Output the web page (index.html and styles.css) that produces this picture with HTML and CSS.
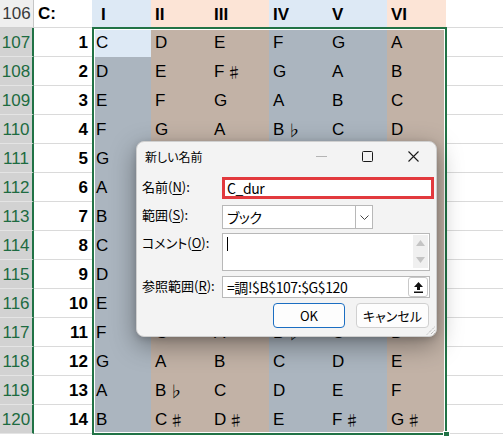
FILE: index.html
```html
<!DOCTYPE html>
<html lang="ja">
<head>
<meta charset="utf-8">
<link rel="stylesheet" href="styles.css">
</head>
<body>
<div class="sheet">
  <div class="c rh0">106</div><div class="c ca hd">C:</div><div class="c hb hd pi">I</div><div class="c hp hd">II</div><div class="c hp hd">III</div><div class="c hb hd">IV</div><div class="c hb hd">V</div><div class="c hp hd">VI</div><div class="c rest"></div>
  <div class="c rh">107</div><div class="c num">1</div><div class="c act">C</div><div class="c br">D</div><div class="c br">E</div><div class="c bl">F</div><div class="c bl">G</div><div class="c br">A</div><div class="c rest"></div>
  <div class="c rh">108</div><div class="c num">2</div><div class="c bl">D</div><div class="c br">E</div><div class="c br">F<span class="acc">♯</span></div><div class="c bl">G</div><div class="c bl">A</div><div class="c br">B</div><div class="c rest"></div>
  <div class="c rh">109</div><div class="c num">3</div><div class="c bl">E</div><div class="c br">F</div><div class="c br">G</div><div class="c bl">A</div><div class="c bl">B</div><div class="c br">C</div><div class="c rest"></div>
  <div class="c rh">110</div><div class="c num">4</div><div class="c bl">F</div><div class="c br">G</div><div class="c br">A</div><div class="c bl">B<span class="acc">♭</span></div><div class="c bl">C</div><div class="c br">D</div><div class="c rest"></div>
  <div class="c rh">111</div><div class="c num">5</div><div class="c bl">G</div><div class="c br"></div><div class="c br"></div><div class="c bl"></div><div class="c bl"></div><div class="c br"></div><div class="c rest"></div>
  <div class="c rh">112</div><div class="c num">6</div><div class="c bl">A</div><div class="c br"></div><div class="c br"></div><div class="c bl"></div><div class="c bl"></div><div class="c br"></div><div class="c rest"></div>
  <div class="c rh">113</div><div class="c num">7</div><div class="c bl">B</div><div class="c br"></div><div class="c br"></div><div class="c bl"></div><div class="c bl"></div><div class="c br"></div><div class="c rest"></div>
  <div class="c rh">114</div><div class="c num">8</div><div class="c bl">C</div><div class="c br"></div><div class="c br"></div><div class="c bl"></div><div class="c bl"></div><div class="c br"></div><div class="c rest"></div>
  <div class="c rh">115</div><div class="c num">9</div><div class="c bl">D</div><div class="c br"></div><div class="c br"></div><div class="c bl"></div><div class="c bl"></div><div class="c br"></div><div class="c rest"></div>
  <div class="c rh">116</div><div class="c num">10</div><div class="c bl">E</div><div class="c br"></div><div class="c br"></div><div class="c bl"></div><div class="c bl"></div><div class="c br"></div><div class="c rest"></div>
  <div class="c rh">117</div><div class="c num">11</div><div class="c bl">F</div><div class="c br">G</div><div class="c br">A</div><div class="c bl">B<span class="acc">♭</span></div><div class="c bl">C</div><div class="c br">D</div><div class="c rest"></div>
  <div class="c rh">118</div><div class="c num">12</div><div class="c bl">G</div><div class="c br">A</div><div class="c br">B</div><div class="c bl">C</div><div class="c bl">D</div><div class="c br">E</div><div class="c rest"></div>
  <div class="c rh">119</div><div class="c num">13</div><div class="c bl">A</div><div class="c br">B<span class="acc">♭</span></div><div class="c br">C</div><div class="c bl">D</div><div class="c bl">E</div><div class="c br">F</div><div class="c rest"></div>
  <div class="c rh">120</div><div class="c num">14</div><div class="c bl">B</div><div class="c br">C<span class="acc">♯</span></div><div class="c br">D<span class="acc">♯</span></div><div class="c bl">E</div><div class="c bl">F<span class="acc">♯</span></div><div class="c br">G<span class="acc">♯</span></div><div class="c rest"></div>

  <div class="sel"><span class="handle"></span></div>

  <div class="dlg">
    <div class="titlebar">
      <span class="title">新しい名前</span>
      <div class="tbtns">
        <span class="tb"><svg width="11" height="1" viewBox="0 0 11 1"><rect width="11" height="1" fill="#b4b4b4"/></svg></span>
        <span class="tb"><svg width="11" height="11" viewBox="0 0 11 11"><rect x="0.5" y="0.5" width="10" height="10" rx="1" fill="none" stroke="#1a1a1a" stroke-width="1"/></svg></span>
        <span class="tb"><svg width="11" height="11" viewBox="0 0 11 11"><path d="M0.5 0.5L10.5 10.5M10.5 0.5L0.5 10.5" stroke="#1a1a1a" stroke-width="1.1"/></svg></span>
      </div>
    </div>
    <div class="form">
      <div class="row r-name"><span class="lbl"><span class="k">名前</span><span>(</span><u>N</u><span>):</span></span><div class="field name">C_dur</div></div>
      <div class="row r-scope"><span class="lbl"><span class="k">範囲</span><span>(</span><u>S</u><span>):</span></span><div class="field combo"><span class="ftext">ブック</span><span class="drop"><svg width="9" height="5" viewBox="0 0 9 5"><path d="M0.5 0.5L4.5 4.5L8.5 0.5" fill="none" stroke="#444" stroke-width="1"/></svg></span></div></div>
      <div class="row r-memo"><span class="lbl"><span class="k">コメント</span><span>(</span><u>O</u><span>):</span></span><div class="field memo"><span class="caret"></span><div class="vscroll"><svg width="9" height="6" viewBox="0 0 9 6"><path d="M4.5 0L9 6H0Z" fill="#c4c4c4"/></svg><svg width="9" height="6" viewBox="0 0 9 6"><path d="M0 0H9L4.5 6Z" fill="#c4c4c4"/></svg></div></div></div>
      <div class="row r-ref"><span class="lbl"><span class="k">参照範囲</span><span>(</span><u>R</u><span>):</span></span><div class="field ref"><span class="ftext">=調!$B$107:$G$120</span><span class="refbtn"><svg width="9" height="11" viewBox="0 0 9 11"><path d="M4.5 0L9 5H6V8H3V5H0Z" fill="#111"/><rect x="0" y="9.5" width="9" height="1.5" fill="#111"/></svg></span></div></div>
      <div class="btnrow"><span class="btn ok">OK</span><span class="btn">キャンセル</span></div>
    </div>
    <svg class="grip" width="9" height="9" viewBox="0 0 9 9"><path d="M8.5 1L1 8.5M8.5 4.5L4.5 8.5M8.5 7.5L7.5 8.5" stroke="#9a9a9a" stroke-width="1" stroke-dasharray="1 1"/></svg>
  </div>
</div>
</body>
</html>
```
FILE: styles.css
```css
* { box-sizing: border-box; }
html, body { margin: 0; padding: 0; background: #fff; }
.sheet {
  position: relative;
  width: 503px;
  height: 436px;
  overflow: hidden;
  display: grid;
  grid-template-columns: 34px 58px repeat(6, 59px) 1fr;
  grid-template-rows: 28px repeat(14, 29px) 1fr;
  font-family: "Liberation Sans", "Noto Sans CJK JP", sans-serif;
  font-size: 17px;
  color: #000;
}
.c {
  display: flex;
  align-items: center;
  padding-left: 4px;
  white-space: nowrap;
  overflow: hidden;
  line-height: 17px;
}
.rh0 {
  justify-content: center;
  padding: 0;
  background: #efefef;
  color: #3a3a3a;
  border-right: 1px solid #c6c6c6;
  border-bottom: 1px solid #d0d0d0;
}
.rh {
  justify-content: center;
  padding: 0;
  background: #d2d2d2;
  color: #1d6b41;
  border-right: 2px solid #217346;
  border-bottom: 1px solid #e4e4e4;
}
.ca { background: #fff; border-bottom: 1px solid #dadada; }
.hd { font-weight: bold; }
.pi { padding-left: 9px; }
.hb { background: #dde9f5; }
.hp { background: #fce4d6; }
.act { background: #dde9f5; }
.bl { background: #abb5bf; }
.br { background: #c2b2a6; }
.num {
  justify-content: flex-end;
  padding-right: 4px;
  font-weight: bold;
  background: #fff;
  border-bottom: 1px solid #dadada;
}
.rest { background: #fff; border-bottom: 1px solid #dadada; }
.acc {
  font-family: "Noto Sans CJK JP", sans-serif;
  font-size: 15px;
  line-height: 15px;
  margin-left: 2px;
}

.sel {
  position: absolute;
  left: 92px;
  top: 27px;
  width: 355px;
  height: 408px;
  border: 2px solid #217346;
  box-shadow: inset 0 0 0 1px #fff;
}
.handle {
  position: absolute;
  right: -5px;
  bottom: -4px;
  width: 7px;
  height: 6px;
  background: #217346;
  border: 1px solid #fff;
}

.dlg {
  position: absolute;
  left: 136px;
  top: 141px;
  width: 301px;
  height: 196px;
  background: #f3f3f3;
  border: 1px solid #cfcfcf;
  border-radius: 8px;
  box-shadow: 0 8px 26px rgba(0, 0, 0, 0.38), 0 2px 6px rgba(0, 0, 0, 0.15);
  font-family: "Noto Sans CJK JP", sans-serif;
  color: #000;
  z-index: 2;
}
.title, .ftext, .btn, .k { font-feature-settings: "palt"; }
.titlebar {
  display: flex;
  align-items: center;
  height: 28px;
  padding-left: 8px;
}
.title { font-size: 12px; }
.tbtns { margin-left: auto; display: flex; height: 100%; }
.tb {
  width: 46px;
  display: flex;
  align-items: center;
  justify-content: center;
}
.form {
  padding: 7px 2px 0 5px;
  display: flex;
  flex-direction: column;
}
.row { display: flex; align-items: flex-start; }
.lbl {
  width: 80px;
  flex: none;
  display: flex;
  font-size: 13px;
  line-height: 19px;
  white-space: nowrap;
}
.lbl u {
  text-decoration-thickness: 1px;
  text-underline-offset: 2px;
}
.field {
  flex: 1;
  display: flex;
  align-items: center;
  background: #fff;
  border: 1px solid #b8b8b8;
  font-size: 14px;
  line-height: 18px;
  letter-spacing: -0.4px;
}
.ftext { padding-left: 4px; }
.r-name .field {
  height: 22px;
  border: 3px solid #e2393d;
  padding-left: 2px;
}
.r-scope { margin-top: 6px; }
.r-scope .field { flex: none; width: 151px; height: 24px; }
.drop {
  margin-left: auto;
  width: 17px;
  height: 100%;
  border-left: 1px solid #b8b8b8;
  display: flex;
  align-items: center;
  justify-content: center;
}
.r-memo { margin-top: 4px; }
.r-memo .field {
  height: 38px;
  margin-right: 4px;
  align-items: stretch;
}
.caret {
  width: 1px;
  height: 14px;
  background: #000;
  margin: 3px 0 0 4px;
}
.vscroll {
  margin: 1px 1px 2px auto;
  width: 15px;
  background: #f0f0f0;
  display: flex;
  flex-direction: column;
  align-items: center;
  justify-content: space-around;
}
.r-ref { margin-top: 5px; }
.r-ref .field { height: 22px; margin-right: 4px; }
.refbtn {
  margin-left: auto;
  width: 20px;
  height: 20px;
  margin-right: 1px;
  background: #fff;
  border: 1px solid #c9c9c9;
  border-radius: 3px;
  display: flex;
  align-items: center;
  justify-content: center;
}
.btnrow {
  margin-top: 5px;
  display: flex;
  justify-content: flex-end;
  gap: 11px;
  padding-right: 5px;
}
.btn {
  width: 73px;
  height: 25px;
  display: flex;
  align-items: center;
  justify-content: center;
  background: #fdfdfd;
  border: 1px solid #d0d0d0;
  border-radius: 4px;
  font-size: 13px;
  line-height: 15px;
}
.btn.ok { width: 72px; border-color: #1b6ec2; }
.grip { position: absolute; right: 1px; bottom: 1px; }
```
